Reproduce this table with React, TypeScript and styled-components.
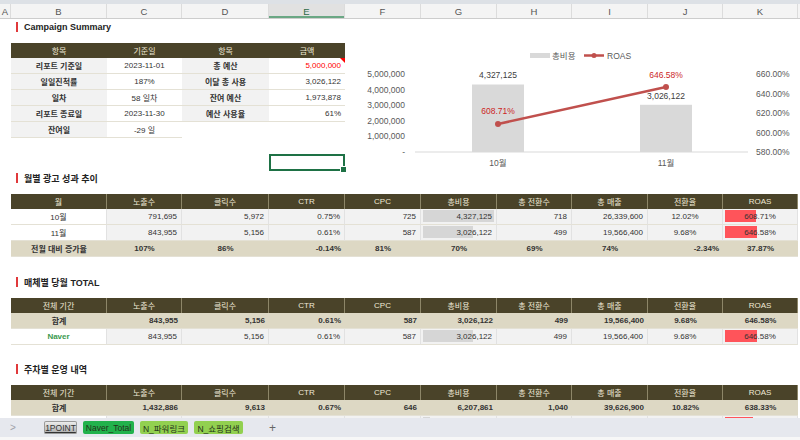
import React from 'react';
import styled, { createGlobalStyle, css } from 'styled-components';

const FONT = `"Liberation Sans", "Noto Sans CJK KR", sans-serif`;

const GlobalStyle = createGlobalStyle`
  html, body { margin: 0; padding: 0; background: #fff; }
  body { font-family: ${FONT}; color: #333; }
  * { box-sizing: border-box; }
`;

// sheet column widths A..K
const SHEET_COLS = [11, 96, 75, 87, 76, 76, 76, 75, 76, 75, 75];
const LETTERS = 'ABCDEFGHIJK'.split('');
const px = (list: number[]) => list.map((w) => `${w}px`).join(' ');

const Page = styled.div`
  width: 800px;
  height: 440px;
  overflow: hidden;
  display: flex;
  flex-direction: column;
  background: #fff;
`;

const TopStrip = styled.div`
  flex: none;
  height: 4px;
  background: #dde1e6;
`;

const ColumnBar = styled.div`
  flex: none;
  display: grid;
  grid-template-columns: ${px(SHEET_COLS)} 1fr;
  height: 15px;
  background: #f4f4f4;
  border-bottom: 1px solid #cdcdcd;
`;

const ColLetter = styled.div<{ $active?: boolean }>`
  display: flex;
  align-items: center;
  justify-content: center;
  font-size: 9.5px;
  color: #555;
  border-right: 1px solid #dcdcdc;
  ${({ $active }) =>
    $active &&
    css`
      background: #e1e1e1;
      color: #2d6a47;
      box-shadow: inset 0 -2px 0 #6aa784;
    `}
`;

const Sheet = styled.div`
  flex: 1;
  overflow: hidden;
  padding-left: 11px;
`;

const TopArea = styled.div`
  display: grid;
  grid-template-columns: 334px 1fr;
  height: 151px;
`;

const LeftPane = styled.div`
  display: flex;
  flex-direction: column;
`;

const Section = styled.section<{ $gap: number }>`
  margin-top: ${({ $gap }) => $gap}px;
`;

const SectionTitle = styled.h2`
  display: flex;
  align-items: center;
  gap: 6px;
  height: 16px;
  margin: 0 0 8px;
  padding-left: 5px;
  font-size: 9px;
  font-weight: bold;
  color: #222;

  &::before {
    content: '';
    width: 2px;
    height: 10px;
    background: #e0393b;
  }
`;

const Table = styled.div<{ $cols: string }>`
  display: grid;
  grid-template-columns: ${({ $cols }) => $cols};
`;

const HeadCell = styled.div<{ $sep?: boolean }>`
  height: 15px;
  display: flex;
  align-items: center;
  justify-content: center;
  background: #4a4329;
  color: #efe9d6;
  font-size: 8px;
  border-right: ${({ $sep }) => ($sep ? '1px solid #8d8668' : 'none')};

  &:last-child {
    border-right: none;
  }
`;

type Tone = 'plain' | 'data' | 'total' | 'blank';
type Align = 'left' | 'center' | 'right';

const toneBg: Record<Tone, string> = {
  plain: '#ffffff',
  data: '#f2f2f2',
  total: '#ddd8c4',
  blank: '#ffffff',
};

const Cell = styled.div<{ $tone: Tone; $align?: Align; $bold?: boolean; $color?: string; $flag?: boolean; $sep?: boolean }>`
  position: relative;
  height: 16px;
  display: flex;
  align-items: center;
  justify-content: ${({ $align }) => ($align === 'right' ? 'flex-end' : $align === 'left' ? 'flex-start' : 'center')};
  padding: 0 4px;
  font-size: 8px;
  white-space: nowrap;
  background: ${({ $tone }) => toneBg[$tone]};
  color: ${({ $color }) => $color || '#333'};
  font-weight: ${({ $bold }) => ($bold ? 'bold' : 'normal')};
  border-bottom: ${({ $tone }) => ($tone === 'blank' ? 'none' : '1px solid #e4e1d5')};
  border-right: ${({ $sep }) => ($sep ? '1px solid #e2e2e2' : 'none')};

  ${({ $flag }) =>
    $flag &&
    css`
      &::after {
        content: '';
        position: absolute;
        top: 0;
        right: 0;
        border-top: 5px solid #ff0000;
        border-left: 5px solid transparent;
      }
    `}
`;

const Bar = styled.span<{ $color: string }>`
  position: absolute;
  left: 2px;
  top: 1px;
  bottom: 2px;
  background: ${({ $color }) => $color};
`;

const CellText = styled.span`
  position: relative;
`;

const SelectRow = styled.div`
  display: grid;
  grid-template-columns: ${px([96, 75, 87, 76])};
  margin-top: 16px;
`;

const SelectBox = styled.div`
  position: relative;
  grid-column: 4;
  height: 17px;
  border: 2px solid #1e7145;

  &::after {
    content: '';
    position: absolute;
    right: -4px;
    bottom: -4px;
    width: 5px;
    height: 5px;
    background: #1e7145;
    border: 1px solid #fff;
  }
`;

const ChartSvg = styled.svg`
  display: block;
  font-family: ${FONT};
`;

const TabBar = styled.div`
  flex: none;
  height: 19px;
  display: flex;
  align-items: center;
  padding-left: 10px;
  background: #e6e8ee;
`;

const Arrow = styled.span`
  width: 34px;
  font-size: 10px;
  color: #a0a0a8;
`;

const TabList = styled.div`
  display: flex;
  gap: 6px;
`;

type TabKind = 'active' | 'dark' | 'light';

const Tab = styled.div<{ $kind: TabKind; $w: number }>`
  width: ${({ $w }) => $w}px;
  height: 13px;
  display: flex;
  align-items: center;
  justify-content: center;
  border-radius: 2px;
  font-size: 8.5px;
  color: #22301a;
  ${({ $kind }) =>
    $kind === 'active'
      ? css`
          background: linear-gradient(#f2f2f2, #a8a8a8);
          box-shadow: inset 0 0 0 1px #9a9a9a;
          color: #333;
          text-decoration: underline;
        `
      : $kind === 'dark'
      ? css`
          background: #22b24c;
        `
      : css`
          background: #92d050;
        `}
`;

const Plus = styled.span`
  margin-left: 26px;
  font-size: 12px;
  color: #666;
`;

const BottomStrip = styled.div`
  flex: none;
  height: 3px;
  background: #f7f7f7;
`;

/* ---------- data ---------- */

const summaryRows = [
  ['리포트 기준일', '2023-11-01', '총 예산', '5,000,000'],
  ['일일진척률', '187%', '이달 총 사용', '3,026,122'],
  ['일차', '58 일차', '잔여 예산', '1,973,878'],
  ['리포트 종료일', '2023-11-30', '예산 사용율', '61%'],
  ['잔여일', '-29 일', '', ''],
];

const perfHead = ['노출수', '클릭수', 'CTR', 'CPC', '총비용', '총 전환수', '총 매출', '전환율', 'ROAS'];
const PERF_COLS = px(SHEET_COLS.slice(1));

type PerfRow = {
  label: string;
  values: string[];
  costPct: number;
  roasPct: number;
  labelColor?: string;
};

const monthlyRows: PerfRow[] = [
  {
    label: '10월',
    values: ['791,695', '5,972', '0.75%', '725', '4,327,125', '718', '26,339,600', '12.02%', '608.71%'],
    costPct: 100,
    roasPct: 44,
  },
  {
    label: '11월',
    values: ['843,955', '5,156', '0.61%', '587', '3,026,122', '499', '19,566,400', '9.68%', '646.58%'],
    costPct: 70,
    roasPct: 45,
  },
];

// align per value column: 노출수..ROAS
const dataAlign: Align[] = ['right', 'right', 'right', 'right', 'right', 'right', 'right', 'center', 'center'];
const growthAlign: Align[] = ['center', 'center', 'right', 'center', 'center', 'center', 'center', 'right', 'center'];

const growth = ['107%', '86%', '-0.14%', '81%', '70%', '69%', '74%', '-2.34%', '37.87%'];
const mediaTotal = ['843,955', '5,156', '0.61%', '587', '3,026,122', '499', '19,566,400', '9.68%', '646.58%'];
const weeklyTotal = ['1,432,886', '9,613', '0.67%', '646', '6,207,861', '1,040', '39,626,900', '10.82%', '638.33%'];

/* ---------- parts ---------- */

function PerfHeader({ first }: { first: string }) {
  return (
    <>
      <HeadCell $sep>{first}</HeadCell>
      {perfHead.map((h) => (
        <HeadCell key={h} $sep>
          {h}
        </HeadCell>
      ))}
    </>
  );
}

function DataRow({ row }: { row: PerfRow }) {
  return (
    <>
      <Cell $tone="plain" $bold={!!row.labelColor} $color={row.labelColor} $sep>
        {row.label}
      </Cell>
      {row.values.map((v, i) => (
        <Cell key={i} $tone="data" $align={dataAlign[i]} $sep>
          {i === 4 && <Bar $color="#d6d6d6" style={{ width: `calc((100% - 4px) * ${row.costPct / 100})` }} />}
          {i === 8 && <Bar $color="#ff545a" style={{ width: `calc((100% - 4px) * ${row.roasPct / 100})` }} />}
          <CellText>{v}</CellText>
        </Cell>
      ))}
    </>
  );
}

function TotalRow({ label, values, align }: { label: string; values: string[]; align: Align[] }) {
  return (
    <>
      <Cell $tone="total" $bold>
        {label}
      </Cell>
      {values.map((v, i) => (
        <Cell key={i} $tone="total" $bold $align={align[i]}>
          {v}
        </Cell>
      ))}
    </>
  );
}

function SummaryTable() {
  return (
    <Table $cols={px([96, 75, 87, 76])}>
      {['항목', '기준일', '항목', '금액'].map((h, i) => (
        <HeadCell key={i}>{h}</HeadCell>
      ))}
      {summaryRows.map((r, ri) => {
        const empty = r[2] === '';
        return (
          <React.Fragment key={ri}>
            <Cell $tone="data" $bold>
              {r[0]}
            </Cell>
            <Cell $tone="plain">{r[1]}</Cell>
            <Cell $tone={empty ? 'blank' : 'data'} $bold>
              {r[2]}
            </Cell>
            <Cell
              $tone={empty ? 'blank' : 'plain'}
              $align="right"
              $color={ri === 0 ? '#ff0000' : undefined}
              $flag={ri === 0}
            >
              {r[3]}
            </Cell>
          </React.Fragment>
        );
      })}
    </Table>
  );
}

function ComboChart() {
  const left = ['5,000,000', '4,000,000', '3,000,000', '2,000,000', '1,000,000', '-'];
  const right = ['660.00%', '640.00%', '620.00%', '600.00%', '580.00%'];
  const base = 152;
  const spanY = 78;
  const yCost = (v: number) => base - (v / 5000000) * spanY;
  const yRoas = (v: number) => base - ((v - 580) / 80) * spanY;
  const points = [
    { x: 498, cost: 4327125, roas: 608.71, label: '10월' },
    { x: 666, cost: 3026122, roas: 646.58, label: '11월' },
  ];
  const fmt = (n: number) => n.toLocaleString('en-US');

  return (
    <ChartSvg width={453} height={151} viewBox="345 19 453 151">
      {/* legend */}
      <rect x={530} y={53} width={20} height={5} fill="#d9d9d9" />
      <text x={552} y={59} fontSize={8.5} fill="#595959">
        총비용
      </text>
      <line x1={584} y1={55.5} x2={604} y2={55.5} stroke="#c0504d" strokeWidth={2.5} />
      <circle cx={594} cy={55.5} r={2.5} fill="#c0504d" />
      <text x={607} y={59} fontSize={8.5} fill="#595959">
        ROAS
      </text>

      {left.map((t, i) => (
        <text key={t} x={405} y={base - i * 15.6 * 0 - (5 - i) * 15.6 + 3} fontSize={8.5} fill="#595959" textAnchor="end">
          {t}
        </text>
      ))}
      {right.map((t, i) => (
        <text key={t} x={756} y={base - (4 - i) * 19.5 + 3} fontSize={8.5} fill="#595959">
          {t}
        </text>
      ))}

      {points.map((p) => (
        <g key={p.label}>
          <rect x={p.x - 26} y={yCost(p.cost)} width={52} height={base - yCost(p.cost)} fill="#d9d9d9" />
          <text x={p.x} y={yCost(p.cost) - 6} fontSize={8.5} fill="#404040" textAnchor="middle">
            {fmt(p.cost)}
          </text>
          <text x={p.x} y={base + 14} fontSize={8.5} fill="#595959" textAnchor="middle">
            {p.label}
          </text>
        </g>
      ))}
      <line x1={415} y1={base} x2={748} y2={base} stroke="#d9d9d9" strokeWidth={1} />

      <line
        x1={points[0].x}
        y1={yRoas(points[0].roas)}
        x2={points[1].x}
        y2={yRoas(points[1].roas)}
        stroke="#c0504d"
        strokeWidth={2.5}
        strokeLinecap="round"
      />
      {points.map((p) => (
        <g key={`r${p.label}`}>
          <circle cx={p.x} cy={yRoas(p.roas)} r={3} fill="#c0504d" />
        </g>
      ))}
      <text x={points[0].x} y={yRoas(points[0].roas) - 10} fontSize={8.5} fill="#cc1f1f" textAnchor="middle">
        608.71%
      </text>
      <text x={points[1].x} y={yRoas(points[1].roas) - 9} fontSize={8.5} fill="#cc1f1f" textAnchor="middle">
        646.58%
      </text>
    </ChartSvg>
  );
}

export default function App() {
  return (
    <Page>
      <GlobalStyle />
      <TopStrip />
      <ColumnBar>
        {LETTERS.map((l) => (
          <ColLetter key={l} $active={l === 'E'}>
            {l}
          </ColLetter>
        ))}
        <div />
      </ColumnBar>

      <Sheet>
        <TopArea>
          <LeftPane>
            <SectionTitle>Campaign Summary</SectionTitle>
            <SummaryTable />
            <SelectRow>
              <SelectBox />
            </SelectRow>
          </LeftPane>
          <ComboChart />
        </TopArea>

        <Section $gap={0}>
          <SectionTitle>월별 광고 성과 추이</SectionTitle>
          <Table $cols={PERF_COLS}>
            <PerfHeader first="월" />
            {monthlyRows.map((r) => (
              <DataRow key={r.label} row={r} />
            ))}
            <TotalRow label="전월 대비 증가율" values={growth} align={growthAlign} />
          </Table>
        </Section>

        <Section $gap={17}>
          <SectionTitle>매체별 당월 TOTAL</SectionTitle>
          <Table $cols={PERF_COLS}>
            <PerfHeader first="전체 기간" />
            <TotalRow label="합계" values={mediaTotal} align={dataAlign} />
            <DataRow
              row={{
                label: 'Naver',
                labelColor: '#3a9a4e',
                values: mediaTotal,
                costPct: 70,
                roasPct: 46,
              }}
            />
          </Table>
        </Section>

        <Section $gap={16}>
          <SectionTitle>주차별 운영 내역</SectionTitle>
          <Table $cols={PERF_COLS}>
            <PerfHeader first="전체 기간" />
            <TotalRow label="합계" values={weeklyTotal} align={dataAlign} />
            <DataRow
              row={{
                label: '',
                values: ['', '', '', '', '', '', '', '', ''],
                costPct: 10,
                roasPct: 40,
              }}
            />
          </Table>
        </Section>
      </Sheet>

      <TabBar>
        <Arrow>&gt;</Arrow>
        <TabList>
          <Tab $kind="active" $w={33}>
            1POINT
          </Tab>
          <Tab $kind="dark" $w={51}>
            Naver_Total
          </Tab>
          <Tab $kind="light" $w={48}>
            N_파워링크
          </Tab>
          <Tab $kind="light" $w={49}>
            N_쇼핑검색
          </Tab>
        </TabList>
        <Plus>+</Plus>
      </TabBar>
      <BottomStrip />
    </Page>
  );
}
